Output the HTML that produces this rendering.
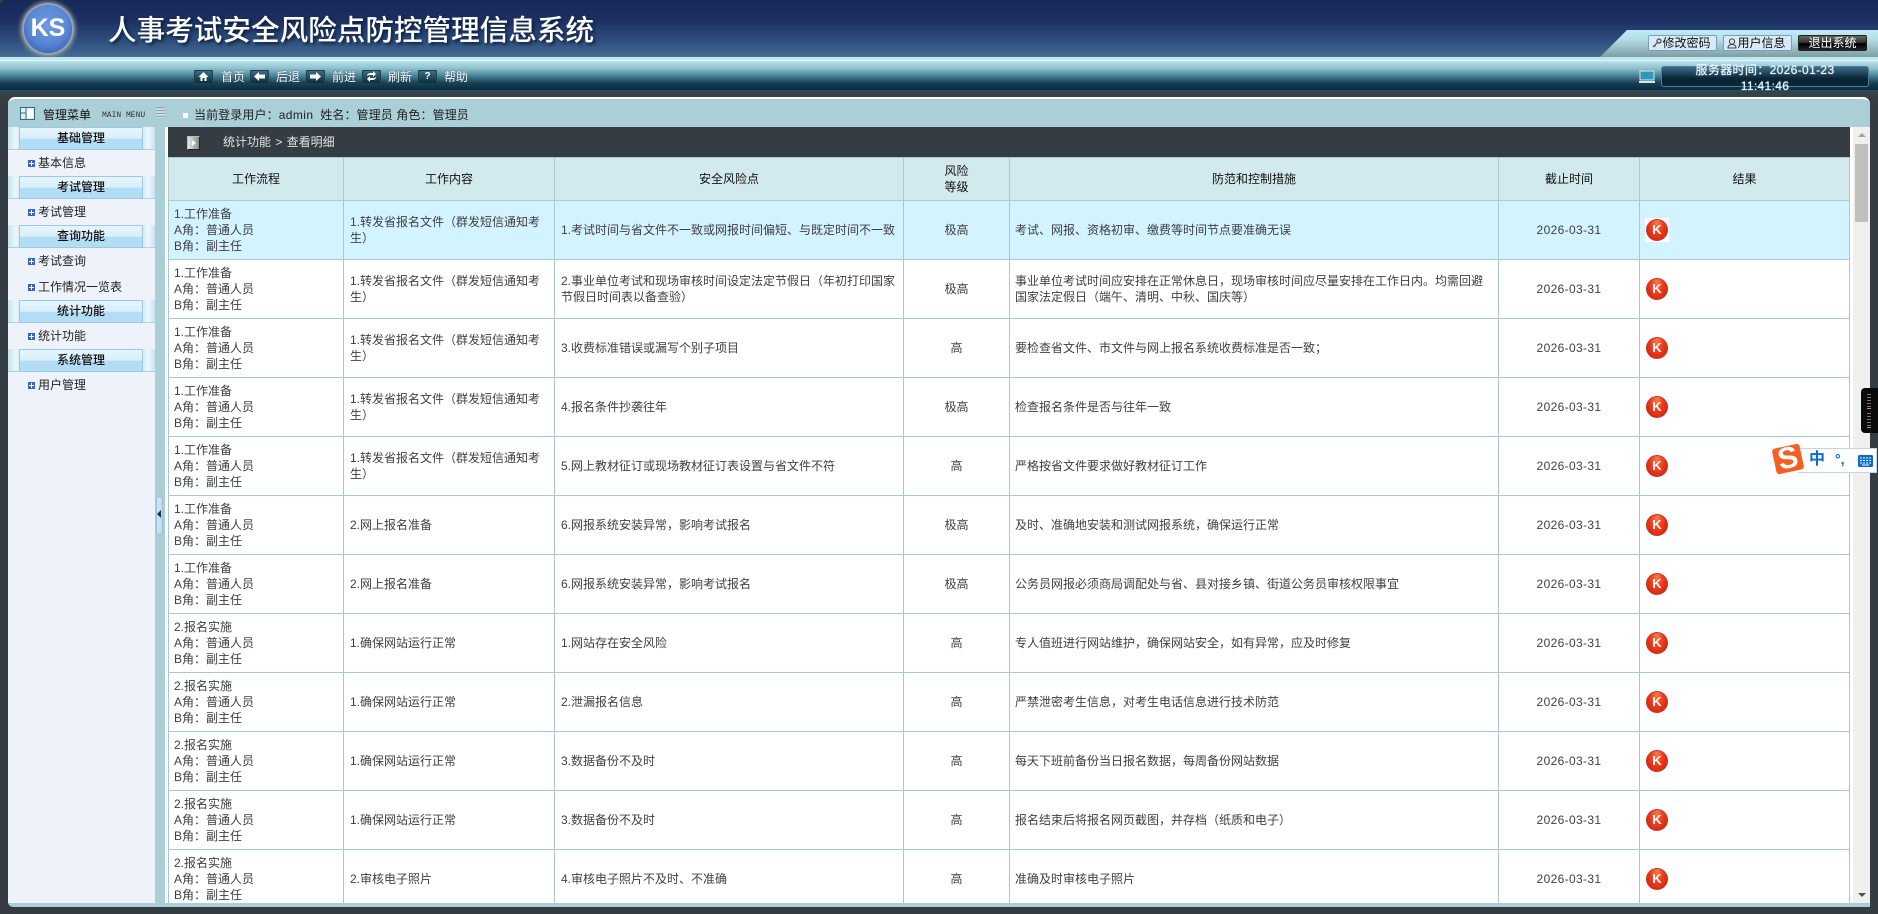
<!DOCTYPE html>
<html lang="zh"><head><meta charset="utf-8"><title>人事考试安全风险点防控管理信息系统</title>
<style>
*{box-sizing:border-box}
html,body{margin:0;padding:0;width:1878px;height:914px;overflow:hidden;background:#363c44;font:12px/16px "Liberation Sans","Noto Sans CJK SC",sans-serif;color:#333}
.a{position:absolute}
#top{left:0;top:0;width:1878px;height:57px;background:linear-gradient(#17275a 0,#1c3060 35%,#2d4c7b 70%,#466d93 100%);border-top-left-radius:6px}
#logo{left:24px;top:5px;width:48px;height:48px;border-radius:50%;background:radial-gradient(circle at 50% 40%,#6d9ae0 0,#5a88d4 50%,#3a5fb0 88%);box-shadow:0 0 0 2px #8da2ba,0 0 5px 3px #a9a99a;color:#fff;font:bold 25px/46px "Liberation Sans",sans-serif;text-align:center}
#title{left:108px;top:15px;font:500 28.6px/32px "Liberation Sans","Noto Sans CJK SC",sans-serif;color:#fff;text-shadow:2px 2px 3px #0a1c3c;white-space:nowrap}
#band{left:0;top:57px;width:1878px;height:3px;background:#bde8f1}
#tab{left:1600px;top:30px;width:278px;height:27px;clip-path:polygon(0 100%,27px 0,100% 0,100% 100%);background:linear-gradient(#c0ecf6 0,#b4dde7 35%,#7c9ea1 100%)}
.btn{top:35px;width:69px;height:16px;border:1px solid #7d9dc0;border-radius:2px;background:#d8eaf5;color:#111;text-align:center;line-height:14px;font-size:12px;padding-left:8px;white-space:nowrap}
#nav{left:0;top:60px;width:1878px;height:30px;border-top:1px solid #e6f7fb;background:linear-gradient(#b6e2eb 0,#8fc2cf 25%,#4b8498 50%,#1a4257 75%,#0a2a3a 100%)}
#navb{left:0;top:90px;width:1878px;height:7px;background:#3a4047;border-top:1px solid #0d5a80}
.ni{top:70px;width:19px;height:14px;background:linear-gradient(#3c6d84,#0b2c3e);border:1px solid #1a4354;border-radius:1px}
.nt{top:69px;color:#fff;white-space:nowrap;text-shadow:0 0 1px #123}
#svr{left:1661px;top:66px;width:208px;height:21px;border:1px solid #4f7f95;border-radius:3px;background:linear-gradient(#3e6d87,#0a2635 60%,#0a2635)}
#svt{left:1661px;top:62px;width:208px;text-align:center;color:#eef7fa;font-size:12px;line-height:16px;letter-spacing:.35px;white-space:pre-line;text-shadow:0 0 1px #def}
#panel{left:8px;top:97px;width:1862px;height:810px;background:#abcfd6;border-top:2px solid #fff;border-radius:7px 7px 0 5px}
#side{left:8px;top:127px;width:147px;height:776px;background:#eef3fb}
.g{left:8px;width:147px;height:23px;background:linear-gradient(90deg,#c9e3f1,#eef7fc 8px,#d5ecf8 11px);border-bottom:1px solid #a8d3e6}
.g b{position:absolute;left:11px;top:0;width:124px;height:23px;border:1px solid #9cc9e1;border-radius:1px;background:linear-gradient(#e6f5fd 0,#d9effa 50%,#b3dcf5 52%,#b3dcf5 100%);font-weight:500;color:#111;text-align:center;line-height:20px;font-size:12px}
.g:after{content:"";position:absolute;right:0;top:0;width:12px;height:22px;background:linear-gradient(90deg,#d5ecf8,#eef7fc 5px,#c9e3f1)}
.it{left:38px;color:#222;white-space:nowrap}
.pl{left:28px;width:7px;height:7px;background:#3a62c8}
.pl:before{content:"";position:absolute;left:1px;top:3px;width:5px;height:1px;background:#fff}
.pl:after{content:"";position:absolute;left:3px;top:1px;width:1px;height:5px;background:#fff}
#content{left:165px;top:127px;width:1705px;height:776px;background:#fff}
#crumb{left:168px;top:127px;width:1682px;height:30px;background:#363c44;color:#e2e2e2}
#tw{left:168px;top:157px;width:1682px;height:746px;overflow:hidden}
table{border-collapse:collapse;table-layout:fixed;width:1682px;position:absolute;left:0;top:0}
td,th{border:1px solid #a9c9d1;padding:0 5px;font-size:12px;line-height:16px;overflow:hidden;color:#404040;font-weight:400}
td:nth-child(2){padding-left:6px}
td:nth-child(3){padding-left:6px}
th{background:#d2e9ee;color:#111;text-align:center}
tr.h{height:43px}
tr.r{height:59px}
tr.s td{background:#d2f3ff}
td.c{text-align:center}
td.d{text-align:center;letter-spacing:.35px}
td{background:#fff}
.k{display:block;width:24px;height:24px;background:#fff;position:relative;margin-left:0}
.k i{position:absolute;left:1px;top:1px;width:22px;height:22px;border-radius:50%;background:radial-gradient(ellipse at 50% 15%,#fb7a4a 0,#ee3d1e 45%,#d5220f 85%,#b8180c 100%);border:1px solid #c23a2a;color:#fff;font:bold 13px/20px "Liberation Sans",sans-serif;text-align:center;font-style:normal}
#sb{left:1853px;top:127px;width:17px;height:776px;background:#f0f0f0}
#thumb{left:1855px;top:144px;width:13px;height:78px;background:#bfbfbf}
</style></head><body>
<div class="a" id="top"></div>
<div class="a" id="logo">KS</div>
<div class="a" id="title">人事考试安全风险点防控管理信息系统</div>
<div class="a" id="tab"></div>
<div class="a btn" style="left:1648px">修改密码</div>
<svg class="a" style="left:1652px;top:38px" width="10" height="10" viewBox="0 0 10 10"><circle cx="7" cy="3" r="2" fill="none" stroke="#444" stroke-width="1.2"/><path d="M5.5 4.5L1 9M2.5 7.5l1 1" stroke="#444" stroke-width="1.2"/></svg>
<div class="a btn" style="left:1723px">用户信息</div>
<svg class="a" style="left:1727px;top:38px" width="10" height="11" viewBox="0 0 10 11"><circle cx="5" cy="3.5" r="2.6" fill="none" stroke="#444"/><path d="M1 10c0-3 2-3.5 4-3.5s4 .5 4 3.5z" fill="none" stroke="#444"/></svg>
<div class="a btn" style="left:1798px;padding-left:0;background:linear-gradient(#666 0,#333 45%,#000 55%,#222 100%);border-color:#222;color:#fff">退出系统</div>
<div class="a" id="band"></div>
<div class="a" id="nav"></div>
<div class="a" id="navb"></div>
<div class="a ni" style="left:194px"></div><svg class="a" style="left:198px;top:71px" width="11" height="11" viewBox="0 0 11 11"><path d="M5.5 1L.5 6h2v4h2V7h2v3h2V6h2z" fill="#fff"/></svg>
<div class="a nt" style="left:221px">首页</div>
<div class="a ni" style="left:250px"></div><svg class="a" style="left:254px;top:72px" width="11" height="9" viewBox="0 0 11 9"><path d="M0 4.5L5 0v2.5h6v4H5V9z" fill="#fff"/></svg>
<div class="a nt" style="left:276px">后退</div>
<div class="a ni" style="left:306px"></div><svg class="a" style="left:310px;top:72px" width="11" height="9" viewBox="0 0 11 9"><path d="M11 4.5L6 0v2.5H0v4h6V9z" fill="#fff"/></svg>
<div class="a nt" style="left:332px">前进</div>
<div class="a ni" style="left:362px"></div><svg class="a" style="left:366px;top:71px" width="11" height="11" viewBox="0 0 11 11"><path d="M1 5c0-2 2-3 4-3h2V0l3 3-3 3V4H5C3 4 2 4 1 5zM10 6c0 2-2 3-4 3H4v2L1 8l3-3v2h2c2 0 3 0 4-1z" fill="#fff"/></svg>
<div class="a nt" style="left:388px">刷新</div>
<div class="a ni" style="left:418px;color:#fff;text-align:center;font:bold 10px/12px 'Liberation Sans',sans-serif">?</div>
<div class="a nt" style="left:444px">帮助</div>
<svg class="a" style="left:1639px;top:70px" width="16" height="14" viewBox="0 0 16 14"><rect x="1" y="1" width="14" height="9" fill="#2f97bf" stroke="#d8e8e0"/><rect x="0" y="11" width="16" height="2" fill="#d8e8e0"/></svg>
<div class="a" id="svr"></div>
<div class="a" id="svt">服务器时间：2026-01-23
11:41:46</div>

<div class="a" id="panel"></div>
<svg class="a" style="left:20px;top:107px" width="15" height="13" viewBox="0 0 15 13"><rect x=".5" y=".5" width="14" height="12" fill="#dff0f4" stroke="#2f6f86"/><path d="M6 1v11M1 6h5" stroke="#2f6f86"/><rect x="7" y="2" width="6" height="9" fill="#fff"/></svg>
<div class="a" style="left:43px;top:107px;color:#111">管理菜单</div>
<div class="a" style="left:102px;top:110px;font:8px/12px 'Liberation Mono',monospace;color:#333;white-space:nowrap">MAIN MENU</div>
<div class="a" style="left:156px;top:107px;width:9px;height:11px;background:repeating-linear-gradient(#8fa8ae 0,#8fa8ae 1px,#c7dadd 1px,#c7dadd 3px)"></div>
<div class="a" style="left:183px;top:113px;width:5px;height:5px;background:#fff"></div>
<div class="a" style="left:194px;top:107px;color:#222;white-space:nowrap;letter-spacing:.1px">当前登录用户：<span style="letter-spacing:.4px">admin</span>&nbsp; 姓名：管理员 角色：管理员</div>

<div class="a" id="side"></div>
<div class="a g" style="top:127px"><b>基础管理</b></div>
<div class="a pl" style="top:160px"></div><div class="a it" style="top:155px">基本信息</div>
<div class="a g" style="top:176px"><b>考试管理</b></div>
<div class="a pl" style="top:209px"></div><div class="a it" style="top:204px">考试管理</div>
<div class="a g" style="top:225px"><b>查询功能</b></div>
<div class="a pl" style="top:258px"></div><div class="a it" style="top:253px">考试查询</div>
<div class="a pl" style="top:284px"></div><div class="a it" style="top:279px">工作情况一览表</div>
<div class="a g" style="top:300px"><b>统计功能</b></div>
<div class="a pl" style="top:333px"></div><div class="a it" style="top:328px">统计功能</div>
<div class="a g" style="top:349px"><b>系统管理</b></div>
<div class="a pl" style="top:382px"></div><div class="a it" style="top:377px">用户管理</div>

<div class="a" style="left:156px;top:496px;width:7px;height:39px;border-radius:4px;background:linear-gradient(90deg,#d6e4f6,#c3d8ee);border:1px solid #9cc0d0"></div>
<div class="a" style="left:157px;top:510px;width:0;height:0;border-style:solid;border-width:4px 4px 4px 0;border-color:transparent #12305c transparent transparent"></div>

<div class="a" id="content"></div>
<div class="a" id="crumb"></div>
<div class="a" style="left:187px;top:136px;width:13px;height:14px;background:linear-gradient(90deg,#e8e8e8,#8a8a8a);border:1px solid #222;border-top-color:#bbb;border-left-color:#bbb"></div>
<div class="a" style="left:192px;top:140px;width:0;height:0;border-style:solid;border-width:3px 0 3px 4px;border-color:transparent transparent transparent #fff"></div>
<div class="a" style="left:223px;top:134px;color:#e2e2e2;white-space:nowrap;word-spacing:1px">统计功能 &gt; 查看明细</div>

<div class="a" id="tw"><table>
<colgroup><col style="width:175px"><col style="width:211px"><col style="width:349px"><col style="width:106px"><col style="width:489px"><col style="width:141px"><col style="width:210px"></colgroup>
<tr class="h"><th>工作流程</th><th>工作内容</th><th>安全风险点</th><th>风险<br>等级</th><th>防范和控制措施</th><th>截止时间</th><th>结果</th></tr>
<tr class="r s"><td>1.工作准备<br>A角：普通人员<br>B角：副主任</td><td>1.转发省报名文件（群发短信通知考<br>生）</td><td>1.考试时间与省文件不一致或网报时间偏短、与既定时间不一致</td><td class="c">极高</td><td>考试、网报、资格初审、缴费等时间节点要准确无误</td><td class="d">2026-03-31</td><td><span class="k"><i>K</i></span></td></tr>
<tr class="r"><td>1.工作准备<br>A角：普通人员<br>B角：副主任</td><td>1.转发省报名文件（群发短信通知考<br>生）</td><td>2.事业单位考试和现场审核时间设定法定节假日（年初打印国家<br>节假日时间表以备查验）</td><td class="c">极高</td><td>事业单位考试时间应安排在正常休息日，现场审核时间应尽量安排在工作日内。均需回避<br>国家法定假日（端午、清明、中秋、国庆等）</td><td class="d">2026-03-31</td><td><span class="k"><i>K</i></span></td></tr>
<tr class="r"><td>1.工作准备<br>A角：普通人员<br>B角：副主任</td><td>1.转发省报名文件（群发短信通知考<br>生）</td><td>3.收费标准错误或漏写个别子项目</td><td class="c">高</td><td>要检查省文件、市文件与网上报名系统收费标准是否一致；</td><td class="d">2026-03-31</td><td><span class="k"><i>K</i></span></td></tr>
<tr class="r"><td>1.工作准备<br>A角：普通人员<br>B角：副主任</td><td>1.转发省报名文件（群发短信通知考<br>生）</td><td>4.报名条件抄袭往年</td><td class="c">极高</td><td>检查报名条件是否与往年一致</td><td class="d">2026-03-31</td><td><span class="k"><i>K</i></span></td></tr>
<tr class="r"><td>1.工作准备<br>A角：普通人员<br>B角：副主任</td><td>1.转发省报名文件（群发短信通知考<br>生）</td><td>5.网上教材征订或现场教材征订表设置与省文件不符</td><td class="c">高</td><td>严格按省文件要求做好教材征订工作</td><td class="d">2026-03-31</td><td><span class="k"><i>K</i></span></td></tr>
<tr class="r"><td>1.工作准备<br>A角：普通人员<br>B角：副主任</td><td>2.网上报名准备</td><td>6.网报系统安装异常，影响考试报名</td><td class="c">极高</td><td>及时、准确地安装和测试网报系统，确保运行正常</td><td class="d">2026-03-31</td><td><span class="k"><i>K</i></span></td></tr>
<tr class="r"><td>1.工作准备<br>A角：普通人员<br>B角：副主任</td><td>2.网上报名准备</td><td>6.网报系统安装异常，影响考试报名</td><td class="c">极高</td><td>公务员网报必须商局调配处与省、县对接乡镇、街道公务员审核权限事宜</td><td class="d">2026-03-31</td><td><span class="k"><i>K</i></span></td></tr>
<tr class="r"><td>2.报名实施<br>A角：普通人员<br>B角：副主任</td><td>1.确保网站运行正常</td><td>1.网站存在安全风险</td><td class="c">高</td><td>专人值班进行网站维护，确保网站安全，如有异常，应及时修复</td><td class="d">2026-03-31</td><td><span class="k"><i>K</i></span></td></tr>
<tr class="r"><td>2.报名实施<br>A角：普通人员<br>B角：副主任</td><td>1.确保网站运行正常</td><td>2.泄漏报名信息</td><td class="c">高</td><td>严禁泄密考生信息，对考生电话信息进行技术防范</td><td class="d">2026-03-31</td><td><span class="k"><i>K</i></span></td></tr>
<tr class="r"><td>2.报名实施<br>A角：普通人员<br>B角：副主任</td><td>1.确保网站运行正常</td><td>3.数据备份不及时</td><td class="c">高</td><td>每天下班前备份当日报名数据，每周备份网站数据</td><td class="d">2026-03-31</td><td><span class="k"><i>K</i></span></td></tr>
<tr class="r"><td>2.报名实施<br>A角：普通人员<br>B角：副主任</td><td>1.确保网站运行正常</td><td>3.数据备份不及时</td><td class="c">高</td><td>报名结束后将报名网页截图，并存档（纸质和电子）</td><td class="d">2026-03-31</td><td><span class="k"><i>K</i></span></td></tr>
<tr class="r"><td>2.报名实施<br>A角：普通人员<br>B角：副主任</td><td>2.审核电子照片</td><td>4.审核电子照片不及时、不准确</td><td class="c">高</td><td>准确及时审核电子照片</td><td class="d">2026-03-31</td><td><span class="k"><i>K</i></span></td></tr>
</table></div>

<div class="a" id="sb"></div>
<div class="a" style="left:1858px;top:133px;width:0;height:0;border-style:solid;border-width:0 4px 4px 4px;border-color:transparent transparent #a0a0a0 transparent"></div>
<div class="a" id="thumb"></div>
<div class="a" style="left:1858px;top:893px;width:0;height:0;border-style:solid;border-width:4px 4px 0 4px;border-color:#505050 transparent transparent transparent"></div>

<div class="a" style="left:1861px;top:388px;width:17px;height:45px;background:#0a0a0a;border-radius:4px 0 0 4px"></div>
<div class="a" style="left:1867px;top:394px;width:4px;height:15px;background:repeating-linear-gradient(#777 0,#777 1px,transparent 1px,transparent 3px)"></div>
<div class="a" style="left:1867px;top:408px;width:4px;height:1px;background:#e08a1c"></div>
<div class="a" style="left:1867px;top:413px;width:4px;height:14px;background:repeating-linear-gradient(#777 0,#777 1px,transparent 1px,transparent 3px)"></div>
<div class="a" style="left:1867px;top:427px;width:4px;height:1px;background:#7ab02c"></div>

<div class="a" style="left:1798px;top:448px;width:79px;height:25px;background:#fff;border:1px solid #c5d5e8;border-left:0"></div>
<div class="a" style="left:1774px;top:446px;width:28px;height:26px;border-radius:3px;background:linear-gradient(#f2622a,#fb5a1e);transform:rotate(-12deg);color:#fff;font:bold 30px/26px 'Liberation Sans',sans-serif;text-align:center;overflow:hidden">S</div>
<div class="a" style="left:1809px;top:451px;width:16px;color:#0a6cd0;font:bold 16px/18px 'Liberation Sans','Noto Sans CJK SC',sans-serif;white-space:nowrap">中</div>
<div class="a" style="left:1835px;top:450px;color:#0a6cd0;font:bold 14px/18px 'Liberation Sans',sans-serif;white-space:nowrap">°,</div>
<svg class="a" style="left:1858px;top:455px" width="15" height="12" viewBox="0 0 15 12"><rect width="15" height="12" rx="1.5" fill="#0a6cd0"/><path d="M2 3h11M2 5.5h11M2 8h11" stroke="#fff" stroke-dasharray="2 1"/><path d="M4 10h7" stroke="#fff"/></svg>
</body></html>
